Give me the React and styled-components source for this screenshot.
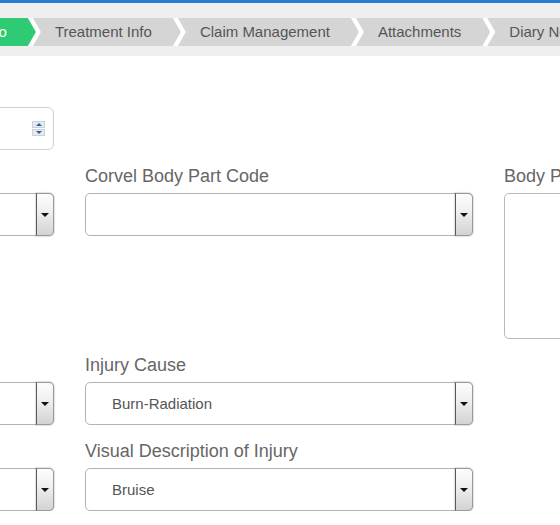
import React from "react";
import styled, { createGlobalStyle } from "styled-components";

const Global = createGlobalStyle`
  html, body { margin: 0; padding: 0; background: #fff; overflow: hidden; }
  body { font-family: "Liberation Sans", Arial, sans-serif; }
  * { box-sizing: border-box; }
`;

const TopBar = styled.div`
  height: 3px;
  background: #2b7dd3;
`;

const TabBand = styled.div`
  background: #efefef;
  padding: 15px 0 10px;
  overflow: hidden;
`;

const TabList = styled.div`
  display: flex;
  background: #fff;
  margin-left: -81px;
  width: 1400px;
`;

const Tab = styled.div`
  height: 28px;
  line-height: 28px;
  padding: 0 29px 0 22px;
  margin-right: -3px;
  font-size: 15px;
  white-space: nowrap;
  color: ${(p) => (p.$active ? "#fff" : "#555")};
  background: ${(p) => (p.$active ? "#2ecb74" : "#d5d5d5")};
  clip-path: polygon(
    0 0,
    calc(100% - 8px) 0,
    100% 50%,
    calc(100% - 8px) 100%,
    0 100%,
    ${(p) => (p.$first ? "0" : "8px")} 50%
  );
`;

const FormGrid = styled.div`
  display: grid;
  grid-template-columns: repeat(3, 388px);
  column-gap: 31px;
  row-gap: 16px;
  margin-left: -334px;
  padding-top: 24px;
  align-items: start;
`;

const Field = styled.div`
  display: flex;
  flex-direction: column;
`;

const Label = styled.label`
  font-size: 18px;
  line-height: 20px;
  color: #666;
  margin-bottom: 7px;
  white-space: nowrap;
`;

const NumberBox = styled.div`
  height: 43px;
  border: 1px solid #cfcfcf;
  border-radius: 6px;
  display: flex;
  align-items: center;
  justify-content: flex-end;
  padding-right: 8px;
`;

const Spinner = styled.div`
  width: 13px;
  display: flex;
  flex-direction: column;
  gap: 1px;
`;

const SpinPart = styled.div`
  height: 7px;
  background: #e3e9f1;
  border: 1px solid #c9d1dc;
  display: flex;
  align-items: center;
  justify-content: center;
  &::after {
    content: "";
    width: 0;
    height: 0;
    border-left: 3px solid transparent;
    border-right: 3px solid transparent;
    ${(p) =>
      p.$up ? "border-bottom: 3px solid #3b5f96;" : "border-top: 3px solid #3b5f96;"}
  }
`;

const SelectBox = styled.div`
  height: 43px;
  border: 1px solid #b3b3b3;
  border-radius: 5px;
  display: flex;
  background: #fff;
`;

const SelectValue = styled.div`
  flex: 1;
  display: flex;
  align-items: center;
  padding-left: 26px;
  font-size: 15px;
  color: #555;
  white-space: nowrap;
  overflow: hidden;
`;

const SelectArrow = styled.div`
  width: 18px;
  margin: -1px -1px -1px 0;
  border: 1px solid #9a9a9a;
  border-left: 1px solid #5a5a5a;
  border-radius: 0 5px 5px 0;
  background: linear-gradient(#fdfdfd, #f0f0f0 40%, #d3d3d3);
  box-shadow: 0 0 1px 1px rgba(0, 0, 0, 0.12);
  display: flex;
  align-items: center;
  justify-content: center;
  &::after {
    content: "";
    width: 0;
    height: 0;
    border-left: 4px solid transparent;
    border-right: 4px solid transparent;
    border-top: 4px solid #111;
  }
`;

const TextArea = styled.textarea`
  height: 146px;
  width: 100%;
  border: 1px solid #b8b8b8;
  border-radius: 5px;
  resize: none;
  font-family: inherit;
  outline: none;
`;

const Empty = styled.div``;

function Select({ value }) {
  return (
    <SelectBox>
      <SelectValue>{value}</SelectValue>
      <SelectArrow />
    </SelectBox>
  );
}

const tabs = [
  "Injury Info",
  "Treatment Info",
  "Claim Management",
  "Attachments",
  "Diary Notes",
  "History",
];

export default function App() {
  return (
    <>
      <Global />
      <TopBar />
      <TabBand>
        <TabList>
          {tabs.map((t, i) => (
            <Tab key={t} $active={i === 0} $first={i === 0}>
              {t}
            </Tab>
          ))}
        </TabList>
      </TabBand>
      <FormGrid>
        <Field>
          <Label>Days Lost</Label>
          <NumberBox>
            <Spinner>
              <SpinPart $up />
              <SpinPart />
            </Spinner>
          </NumberBox>
        </Field>
        <Empty />
        <Empty />

        <Field>
          <Label>Body Part</Label>
          <Select value="" />
        </Field>
        <Field>
          <Label>Corvel Body Part Code</Label>
          <Select value="" />
        </Field>
        <Field>
          <Label>Body Part Description</Label>
          <TextArea />
        </Field>

        <Field>
          <Label>Injury Type</Label>
          <Select value="" />
        </Field>
        <Field>
          <Label>Injury Cause</Label>
          <Select value="Burn-Radiation" />
        </Field>
        <Empty />

        <Field>
          <Label>Nature of Injury</Label>
          <Select value="" />
        </Field>
        <Field>
          <Label>Visual Description of Injury</Label>
          <Select value="Bruise" />
        </Field>
        <Empty />
      </FormGrid>
    </>
  );
}
